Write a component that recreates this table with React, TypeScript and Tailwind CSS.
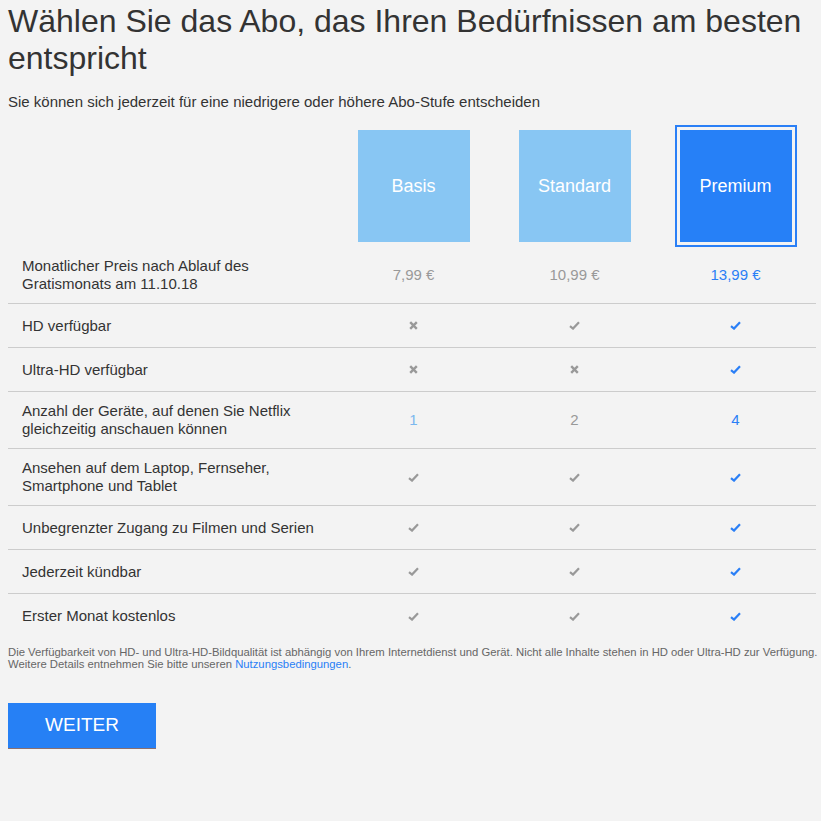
const plans = ['Basis', 'Standard', 'Premium'];

type Cell = 'yes' | 'no' | string;

const rows: { label: string; cells: Cell[]; tall?: boolean }[] = [
  { label: 'Monatlicher Preis nach Ablauf des Gratismonats am 11.10.18', cells: ['7,99 €', '10,99 €', '13,99 €'], tall: true },
  { label: 'HD verfügbar', cells: ['no', 'yes', 'yes'] },
  { label: 'Ultra-HD verfügbar', cells: ['no', 'no', 'yes'] },
  { label: 'Anzahl der Geräte, auf denen Sie Netflix gleichzeitig anschauen können', cells: ['1', '2', '4'], tall: true },
  { label: 'Ansehen auf dem Laptop, Fernseher, Smartphone und Tablet', cells: ['yes', 'yes', 'yes'], tall: true },
  { label: 'Unbegrenzter Zugang zu Filmen und Serien', cells: ['yes', 'yes', 'yes'] },
  { label: 'Jederzeit kündbar', cells: ['yes', 'yes', 'yes'] },
  { label: 'Erster Monat kostenlos', cells: ['yes', 'yes', 'yes'] },
];

const Check = ({ active }: { active: boolean }) => (
  <svg width="11" height="9" viewBox="0 0 11 9">
    <path d="M1 5.2 L4 7.6 L10 1.2" fill="none" stroke={active ? '#2a7ff6' : '#999'} strokeWidth="2.2" />
  </svg>
);

const Cross = () => (
  <svg width="9" height="9" viewBox="0 0 9 9">
    <path d="M1.2 1.2 L7.8 7.8 M7.8 1.2 L1.2 7.8" stroke="#999" strokeWidth="2.4" />
  </svg>
);

const CellContent = ({ value, col }: { value: Cell; col: number }) => {
  if (value === 'yes') return <Check active={col === 2} />;
  if (value === 'no') return <Cross />;
  const color = col === 2 ? 'text-[#2a7ff6]' : value === '1' ? 'text-[#7cb8ee]' : 'text-[#999]';
  return <span className={color}>{value}</span>;
};

export default function App() {
  return (
    <div className="min-h-[821px] bg-[#f3f3f3] px-2 pt-[3px] text-[#333] font-['Liberation_Sans',Arial,sans-serif]">
      <h1 className="text-[32px] leading-[37px] text-[#333]">
        Wählen Sie das Abo, das Ihren Bedürfnissen am besten entspricht
      </h1>
      <p className="mt-[16px] text-[15px] leading-[18px]">
        Sie können sich jederzeit für eine niedrigere oder höhere Abo-Stufe entscheiden
      </p>

      <div className="mt-[12px] w-[808px]">
        <div className="flex h-[124px]">
          <div className="w-[325px]" />
          {plans.map((p, i) => (
            <div key={p} className="flex w-[161px] justify-center pt-[7px]">
              {i === 2 ? (
                <div className="-mt-[5px] border-2 border-[#2a7ff6] p-[3px] h-fit">
                  <div className="flex h-[112px] w-[112px] items-center justify-center bg-[#2680f7] text-[18px] text-white">
                    {p}
                  </div>
                </div>
              ) : (
                <div className="flex h-[112px] w-[112px] items-center justify-center bg-[#88c6f3] text-[18px] text-white">
                  {p}
                </div>
              )}
            </div>
          ))}
        </div>

        {rows.map((r, idx) => (
          <div
            key={r.label}
            className={`flex items-center text-[15px] leading-[18px] ${idx < rows.length - 1 ? 'border-b border-[#ccc]' : ''} ${r.tall ? 'h-[57px]' : 'h-[44px]'}`}
          >
            <div className="w-[325px] pl-[14px] pr-4">{r.label}</div>
            {r.cells.map((c, i) => (
              <div key={i} className="flex w-[161px] justify-center">
                <CellContent value={c} col={i} />
              </div>
            ))}
          </div>
        ))}
      </div>

      <p className="mt-[8px] whitespace-nowrap text-[11.3px] leading-[12px] text-[#666]">
        Die Verfügbarkeit von HD- und Ultra-HD-Bildqualität ist abhängig von Ihrem Internetdienst und Gerät. Nicht alle Inhalte stehen in HD oder Ultra-HD zur Verfügung.
        <br />
        Weitere Details entnehmen Sie bitte unseren <a className="text-[#2a7ff6]">Nutzungsbedingungen</a>.
      </p>

      <button className="mt-[33px] h-[45px] w-[148px] bg-[#2680f5] text-[19px] text-white shadow-[0_1px_0_#8a7070]">
        WEITER
      </button>
    </div>
  );
}
